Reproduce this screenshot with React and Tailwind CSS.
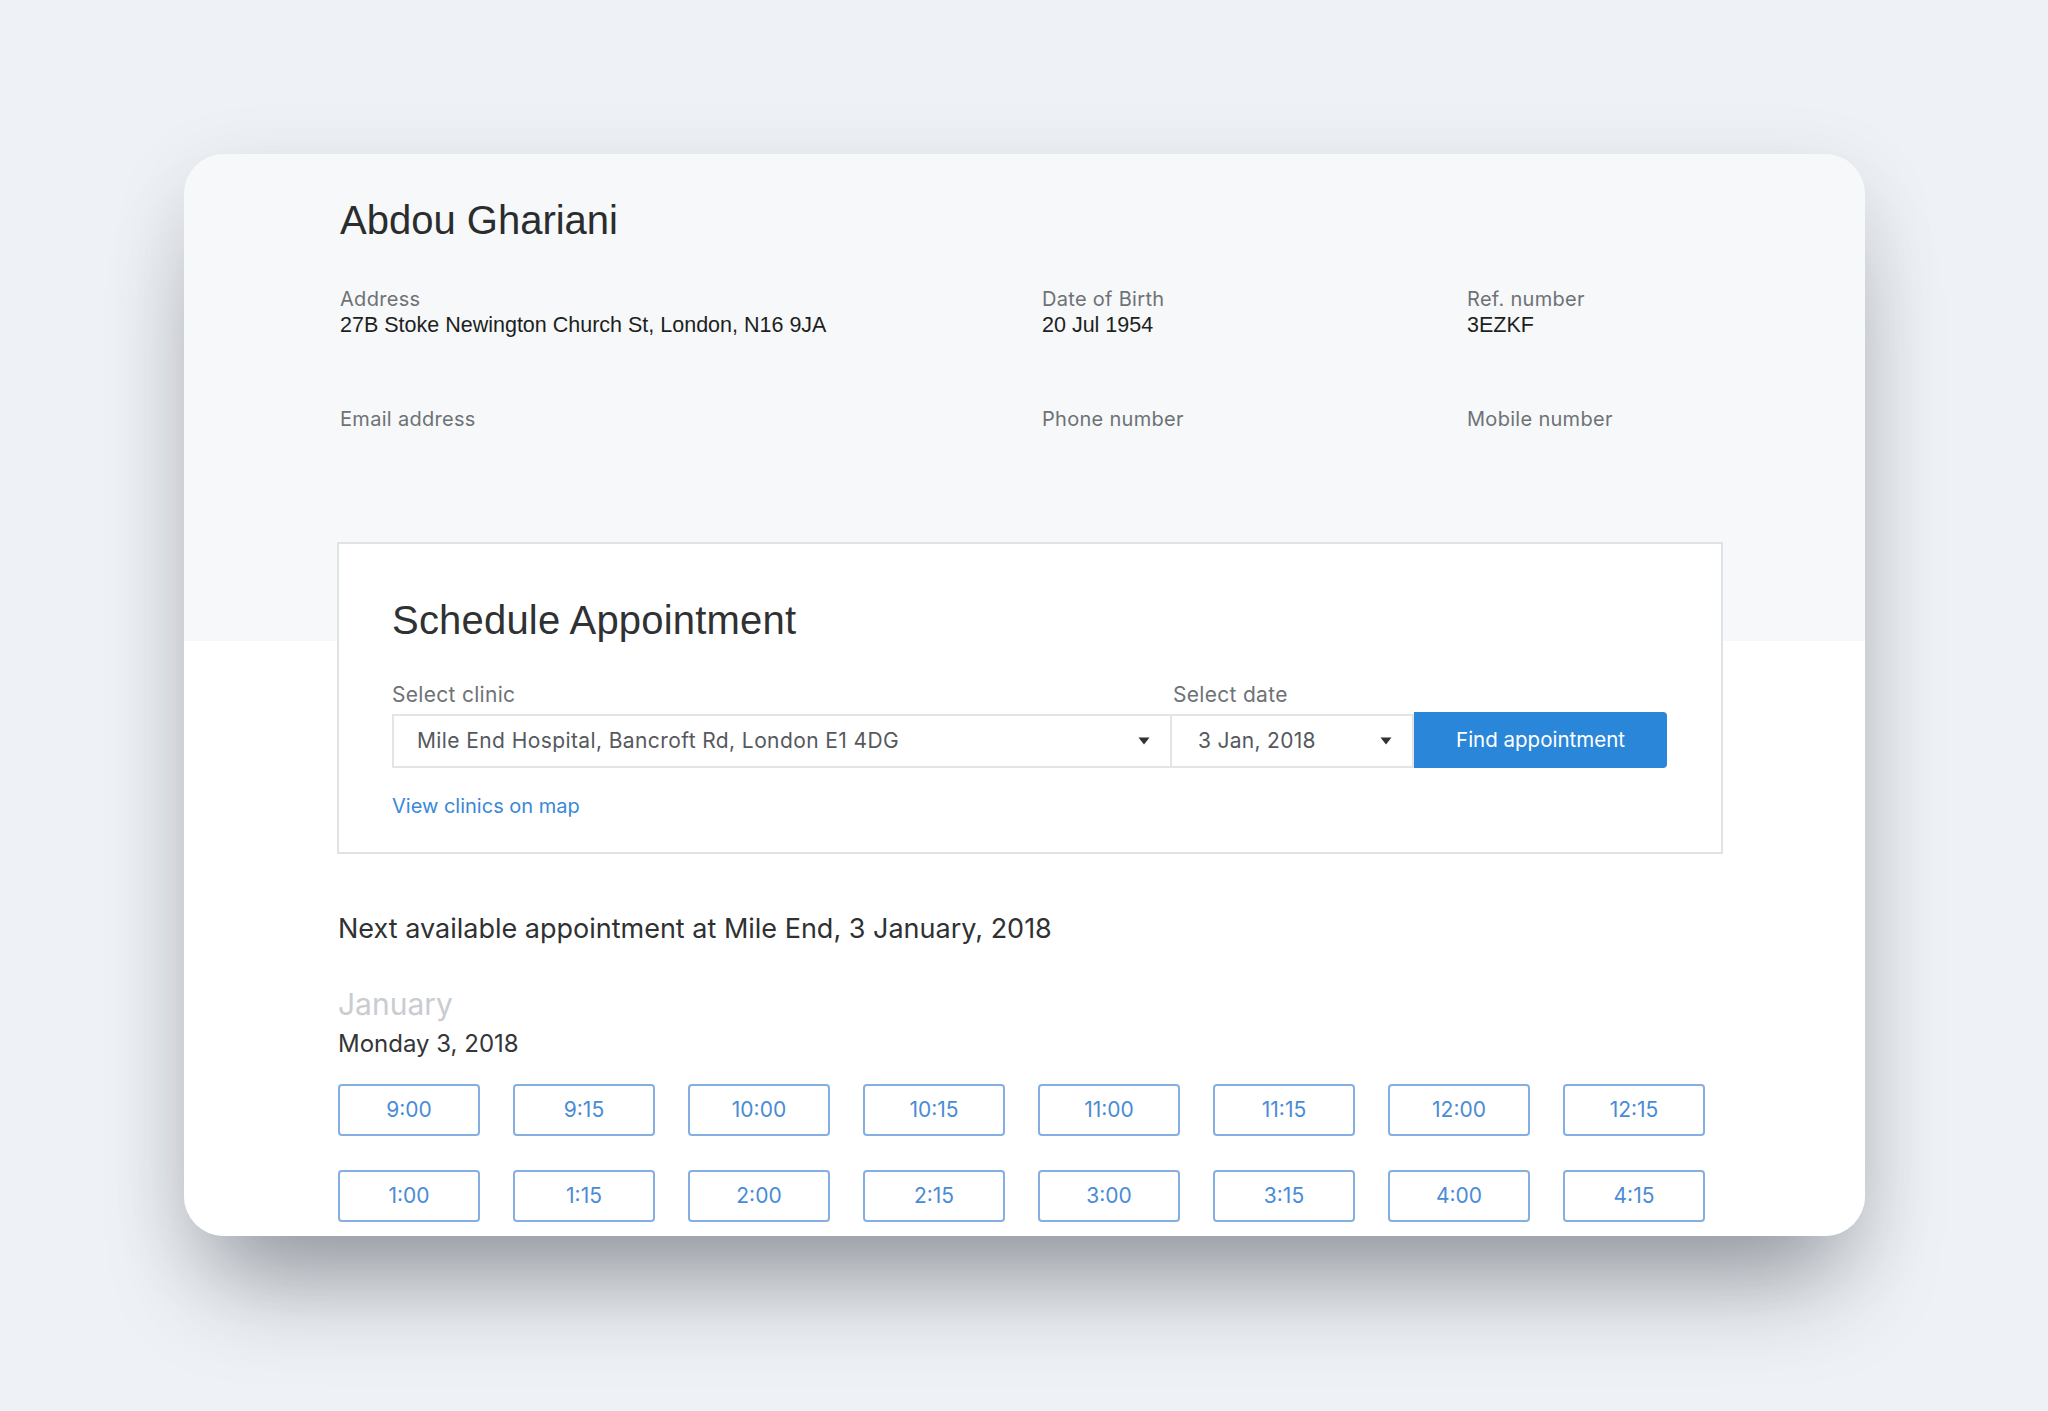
import React from "react";

const patient = [
  [
    { label: "Address", value: "27B Stoke Newington Church St, London, N16 9JA" },
    { label: "Date of Birth", value: "20 Jul 1954" },
    { label: "Ref. number", value: "3EZKF" },
  ],
  [
    { label: "Email address", value: "" },
    { label: "Phone number", value: "" },
    { label: "Mobile number", value: "" },
  ],
];

const slots = [
  "9:00", "9:15", "10:00", "10:15", "11:00", "11:15", "12:00", "12:15",
  "1:00", "1:15", "2:00", "2:15", "3:00", "3:15", "4:00", "4:15",
];

const sf = "font-['Inter','Noto_Sans',sans-serif]";
const helv = "font-['Liberation_Sans','Arial',sans-serif]";

// little filled triangle used by the dropdowns
const Caret = () => (
  <svg width="12" height="8" viewBox="0 0 12 8" className="shrink-0">
    <path d="M0.5 0.5h11L6 7.5z" fill="#2f3134" />
  </svg>
);

const Field = ({ label, value }) => (
  <div className="h-[51px]">
    <div className={`${sf} text-[20px] leading-[24px] tracking-[0.3px] text-[#6e7276]`}>{label}</div>
    <div className={`${helv} mt-px text-[21.5px] leading-[26px] text-[#1d1f21]`}>{value}</div>
  </div>
);

export default function App() {
  return (
    <div className="min-h-screen bg-[#eef1f5] pt-[154px] pl-[184px] pb-[175px]">
      <div className="w-[1681px] h-[1082px] overflow-hidden rounded-[40px] bg-[linear-gradient(to_bottom,#f6f8f9_487px,#ffffff_487px)] pl-[153px] pt-[42px] shadow-[0_70px_100px_-30px_rgba(30,35,45,0.4),0_20px_80px_rgba(30,35,45,0.1)]">
        <div className="w-[1386px]">
          {/* patient details */}
          <div className="pl-[3px]">
            <h1 className={`${helv} text-[40px] leading-[48px] text-[#2b2c2e]`}>Abdou Ghariani</h1>
            <div className="mt-[43px] grid grid-cols-[702px_425px_1fr] gap-y-[69px]">
              {patient.flat().map((f) => (
                <Field key={f.label} label={f.label} value={f.value} />
              ))}
            </div>
          </div>

          {/* schedule box */}
          <div className="mt-[84px] border-2 border-[#e0e3e6] bg-white pl-[53px] pt-[52px] pb-[34px]">
            <h2 className={`${helv} text-[40px] leading-[48px] tracking-[0.2px] text-[#2f3133]`}>
              Schedule Appointment
            </h2>
            <div className="mt-[39px] flex items-end">
              <div className="w-[778px]">
                <div className={`${sf} text-[21px] leading-[24px] tracking-[0.3px] text-[#6e7276]`}>Select clinic</div>
                <div className="mt-[7px] flex h-[54px] items-center justify-between border-2 border-r-0 border-[#e2e5e8] pl-[23px] pr-[20px]">
                  <span className={`${sf} text-[21px] tracking-[0.4px] text-[#55595e]`}>
                    Mile End Hospital, Bancroft Rd, London E1 4DG
                  </span>
                  <Caret />
                </div>
              </div>
              <div className="w-[244px]">
                <div className={`${sf} pl-[3px] text-[21px] leading-[24px] tracking-[0.3px] text-[#6e7276]`}>Select date</div>
                <div className="mt-[7px] flex h-[54px] items-center justify-between border-2 border-[#e2e5e8] pl-[26px] pr-[20px]">
                  <span className={`${sf} text-[21px] tracking-[0.3px] text-[#55595e]`}>3 Jan, 2018</span>
                  <Caret />
                </div>
              </div>
              <button className={`${sf} h-[56px] w-[253px] rounded-r-[4px] bg-[#2a86d9] text-[20.5px] text-white`}>
                Find appointment
              </button>
            </div>
            <a className={`${sf} mt-[26px] block text-[20px] leading-[24px] text-[#3a88d8]`}>View clinics on map</a>
          </div>

          {/* next slots */}
          <p className={`${sf} mt-[59px] pl-px text-[27px] leading-[32px] text-[#2f3133]`}>
            Next available appointment at Mile End, 3 January, 2018
          </p>
          <div className={`${sf} mt-[41px] pl-px text-[30px] leading-[36px] text-[#c9ccd0]`}>January</div>
          <div className={`${sf} mt-[7px] pl-px text-[24px] leading-[30px] text-[#333538]`}>Monday 3, 2018</div>
          <div className="mt-[25px] grid grid-cols-[repeat(8,142px)] gap-x-[33px] gap-y-[34px] pl-px">
            {slots.map((t) => (
              <button
                key={t}
                className={`${sf} h-[52px] rounded-[4px] border-2 border-[#86afe1] text-[21px] text-[#4a8bd6]`}
              >
                {t}
              </button>
            ))}
          </div>
        </div>
      </div>
    </div>
  );
}
